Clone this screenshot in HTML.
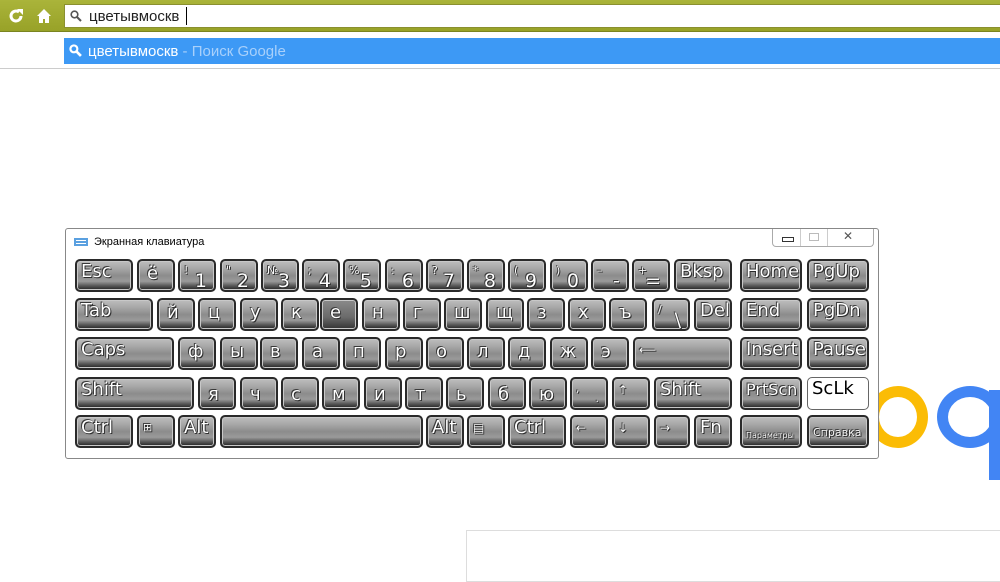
<!DOCTYPE html>
<html><head><meta charset="utf-8"><style>
body{margin:0;width:1000px;height:570px;position:relative;overflow:hidden;background:#fff;font-family:"Liberation Sans","DejaVu Sans",sans-serif}
.top{position:absolute;left:0;top:0;width:1000px;height:31px;background:linear-gradient(#aab43a,#98a228);border-bottom:1px solid #7a8420}
.inp{position:absolute;left:64px;top:4px;width:940px;height:24px;background:#fff;border:1px solid #8a9030;box-sizing:border-box}
.drop{position:absolute;left:64px;top:38px;width:936px;height:26px;background:#3d99f5}
.win{position:absolute;left:65px;top:228px;width:814px;height:231px;border:1px solid #888;border-radius:3px;background:#fff;box-sizing:border-box}
.k{position:absolute;height:33px;box-sizing:border-box;border:2px solid #2a2a2a;border-radius:5px;background:linear-gradient(#bdbdbd 0%,#a8a8a8 25%,#8c8c8c 50%,#9a9a9a 70%,#5a5a5a 85%,#222 100%);box-shadow:inset 0 0 0 1px #c8c8c8;color:#fff;font-size:18px;line-height:18px;padding:2px 4px;font-family:"DejaVu Sans","Liberation Sans",sans-serif;text-shadow:0 0 1px #000,1px 1px 0 #333,-1px -1px 0 #444}
.s{font-size:11px;position:absolute;left:4px;top:1px}
.d{position:absolute;right:7px;bottom:0;font-size:19px}
.c{text-align:left;padding-left:8px;padding-top:4px}
</style></head><body>
<div class="top"></div>
<svg style="position:absolute;left:8px;top:8px" width="16" height="16" viewBox="0 0 16 16"><path d="M13 8a5 5 0 1 1-2-4" fill="none" stroke="#fff" stroke-width="3"/><path d="M9 1h6v6z" fill="#fff"/></svg>
<svg style="position:absolute;left:36px;top:8px" width="16" height="16" viewBox="0 0 16 16"><path d="M8 1L1 8h2v7h4v-4h2v4h4V8h2z" fill="#fff"/></svg>
<div class="inp"><svg style="position:absolute;left:5px;top:5px" width="12" height="12" viewBox="0 0 12 12"><circle cx="4.5" cy="4.5" r="3.3" fill="none" stroke="#555" stroke-width="1.6"/><path d="M7 7l4 4" stroke="#555" stroke-width="2"/></svg><span style="position:absolute;left:24px;top:3px;font-size:15px;color:#222">цветывмоскв</span><span style="position:absolute;left:121px;top:2px;width:1px;height:18px;background:#000"></span></div>
<div class="drop"><svg style="position:absolute;left:5px;top:6px" width="13" height="13" viewBox="0 0 12 12"><circle cx="4.5" cy="4.5" r="3.2" fill="none" stroke="#fff" stroke-width="2"/><path d="M7 7l4 4" stroke="#fff" stroke-width="2.5"/></svg><span style="position:absolute;left:24px;top:5px;font-size:15px;color:#fff">цветывмоскв <span style="color:#a8d0fb">- Поиск Google</span></span></div>
<div style="position:absolute;left:0;top:68px;width:1000px;height:1px;background:#ccc"></div>
<div style="position:absolute;left:868px;top:386px;width:38px;height:40px;border:11px solid #fbbc05;border-radius:50%"></div>
<div style="position:absolute;left:937px;top:386px;width:44px;height:40px;border:11px solid #4285f4;border-radius:50%"></div>
<div style="position:absolute;left:989px;top:390px;width:11px;height:90px;background:#4285f4"></div>
<div style="position:absolute;left:466px;top:530px;width:540px;height:50px;border:1px solid #ddd"></div>
<div class="win">
<svg style="position:absolute;left:8px;top:9px" width="14" height="8"><rect width="14" height="8" fill="#5aa0e0"/><rect x="2" y="2" width="10" height="1" fill="#fff"/><rect x="2" y="5" width="10" height="1" fill="#fff"/></svg>
<span style="position:absolute;left:28px;top:7px;font-size:11px;color:#000">Экранная клавиатура</span>
<div style="position:absolute;left:706px;top:0;width:100px;height:17px;border:1px solid #aaa;border-top:none;border-radius:0 0 4px 4px"><span style="position:absolute;left:9px;top:8px;width:10px;height:3px;border:1px solid #333"></span><span style="position:absolute;left:27px;top:0;width:1px;height:17px;background:#ccc"></span><span style="position:absolute;left:36px;top:4px;width:8px;height:6px;border:1px solid #bbb"></span><span style="position:absolute;left:54px;top:0;width:1px;height:17px;background:#ccc"></span><span style="position:absolute;left:70px;top:0px;font-size:12px;color:#555">✕</span></div>
</div>
<!-- row1 -->
<div class="k" style="left:75px;top:259px;width:58px">Esc</div>
<div class="k c" style="left:137px;top:259px;width:38px">ё</div>
<div class="k" style="left:178px;top:259px;width:38px"><span class="s">!</span><span class="d">1</span></div>
<div class="k" style="left:220px;top:259px;width:38px"><span class="s">"</span><span class="d">2</span></div>
<div class="k" style="left:261px;top:259px;width:38px"><span class="s">№</span><span class="d">3</span></div>
<div class="k" style="left:302px;top:259px;width:38px"><span class="s">;</span><span class="d">4</span></div>
<div class="k" style="left:343px;top:259px;width:38px"><span class="s">%</span><span class="d">5</span></div>
<div class="k" style="left:385px;top:259px;width:38px"><span class="s">:</span><span class="d">6</span></div>
<div class="k" style="left:426px;top:259px;width:38px"><span class="s">?</span><span class="d">7</span></div>
<div class="k" style="left:467px;top:259px;width:38px"><span class="s">*</span><span class="d">8</span></div>
<div class="k" style="left:508px;top:259px;width:38px"><span class="s">(</span><span class="d">9</span></div>
<div class="k" style="left:550px;top:259px;width:38px"><span class="s">)</span><span class="d">0</span></div>
<div class="k" style="left:591px;top:259px;width:38px"><span class="s">–</span><span class="d">-</span></div>
<div class="k" style="left:632px;top:259px;width:38px"><span class="s">+</span><span class="d">=</span></div>
<div class="k" style="left:674px;top:259px;width:58px">Bksp</div>
<div class="k" style="left:740px;top:259px;width:62px">Home</div>
<div class="k" style="left:807px;top:259px;width:62px">PgUp</div>
<!-- row2 -->
<div class="k" style="left:75px;top:298px;width:78px">Tab</div>
<div class="k c" style="left:157px;top:298px;width:38px">й</div>
<div class="k c" style="left:198px;top:298px;width:38px">ц</div>
<div class="k c" style="left:240px;top:298px;width:38px">у</div>
<div class="k c" style="left:281px;top:298px;width:38px">к</div>
<div class="k c" style="left:320px;top:298px;width:38px;background:linear-gradient(#8a8a8a,#6a6a6a 60%,#333)">е</div>
<div class="k c" style="left:362px;top:298px;width:38px">н</div>
<div class="k c" style="left:403px;top:298px;width:38px">г</div>
<div class="k c" style="left:444px;top:298px;width:38px">ш</div>
<div class="k c" style="left:486px;top:298px;width:38px">щ</div>
<div class="k c" style="left:527px;top:298px;width:38px">з</div>
<div class="k c" style="left:568px;top:298px;width:38px">х</div>
<div class="k c" style="left:609px;top:298px;width:38px">ъ</div>
<div class="k" style="left:652px;top:298px;width:38px"><span class="s">/</span><span class="d">\</span></div>
<div class="k" style="left:694px;top:298px;width:38px">Del</div>
<div class="k" style="left:740px;top:298px;width:62px">End</div>
<div class="k" style="left:807px;top:298px;width:62px">PgDn</div>
<!-- row3 -->
<div class="k" style="left:75px;top:337px;width:99px">Caps</div>
<div class="k c" style="left:178px;top:337px;width:38px">ф</div>
<div class="k c" style="left:220px;top:337px;width:38px">ы</div>
<div class="k c" style="left:260px;top:337px;width:38px">в</div>
<div class="k c" style="left:302px;top:337px;width:38px">а</div>
<div class="k c" style="left:343px;top:337px;width:38px">п</div>
<div class="k c" style="left:385px;top:337px;width:38px">р</div>
<div class="k c" style="left:426px;top:337px;width:38px">о</div>
<div class="k c" style="left:467px;top:337px;width:38px">л</div>
<div class="k c" style="left:508px;top:337px;width:38px">д</div>
<div class="k c" style="left:550px;top:337px;width:38px">ж</div>
<div class="k c" style="left:591px;top:337px;width:38px">э</div>
<div class="k" style="left:633px;top:337px;width:99px;font-size:12px">⟵</div>
<div class="k" style="left:740px;top:337px;width:62px">Insert</div>
<div class="k" style="left:807px;top:337px;width:62px">Pause</div>
<!-- row4 -->
<div class="k" style="left:75px;top:377px;width:119px">Shift</div>
<div class="k c" style="left:198px;top:377px;width:38px;padding-top:7px">я</div>
<div class="k c" style="left:240px;top:377px;width:38px;padding-top:7px">ч</div>
<div class="k c" style="left:281px;top:377px;width:38px;padding-top:7px">с</div>
<div class="k c" style="left:322px;top:377px;width:38px;padding-top:7px">м</div>
<div class="k c" style="left:364px;top:377px;width:38px;padding-top:7px">и</div>
<div class="k c" style="left:405px;top:377px;width:38px;padding-top:7px">т</div>
<div class="k c" style="left:446px;top:377px;width:38px;padding-top:7px">ь</div>
<div class="k c" style="left:488px;top:377px;width:38px;padding-top:7px">б</div>
<div class="k c" style="left:529px;top:377px;width:38px;padding-top:7px">ю</div>
<div class="k" style="left:570px;top:377px;width:38px"><span class="s">,</span><span class="d" style="font-size:11px">.</span></div>
<div class="k" style="left:612px;top:377px;width:38px;font-size:12px">↑</div>
<div class="k" style="left:654px;top:377px;width:78px">Shift</div>
<div class="k" style="left:740px;top:377px;width:62px;font-size:16px">PrtScn</div>
<div class="k" style="left:807px;top:377px;width:62px;background:#fff;border:1px solid #666;color:#000;text-shadow:none;box-shadow:none">ScLk</div>
<!-- row5 -->
<div class="k" style="left:75px;top:415px;width:58px">Ctrl</div>
<div class="k" style="left:137px;top:415px;width:38px;font-size:11px">⊞</div>
<div class="k" style="left:178px;top:415px;width:38px">Alt</div>
<div class="k" style="left:220px;top:415px;width:203px"></div>
<div class="k" style="left:426px;top:415px;width:38px">Alt</div>
<div class="k" style="left:467px;top:415px;width:38px;font-size:12px">▤</div>
<div class="k" style="left:508px;top:415px;width:58px">Ctrl</div>
<div class="k" style="left:570px;top:415px;width:38px;font-size:12px">←</div>
<div class="k" style="left:612px;top:415px;width:38px;font-size:12px">↓</div>
<div class="k" style="left:654px;top:415px;width:36px;font-size:12px">→</div>
<div class="k" style="left:694px;top:415px;width:38px">Fn</div>
<div class="k" style="left:740px;top:415px;width:62px;font-size:8px;padding-top:10px">Параметры</div>
<div class="k" style="left:807px;top:415px;width:62px;font-size:11px;padding-top:7px">Справка</div>
</body></html>
